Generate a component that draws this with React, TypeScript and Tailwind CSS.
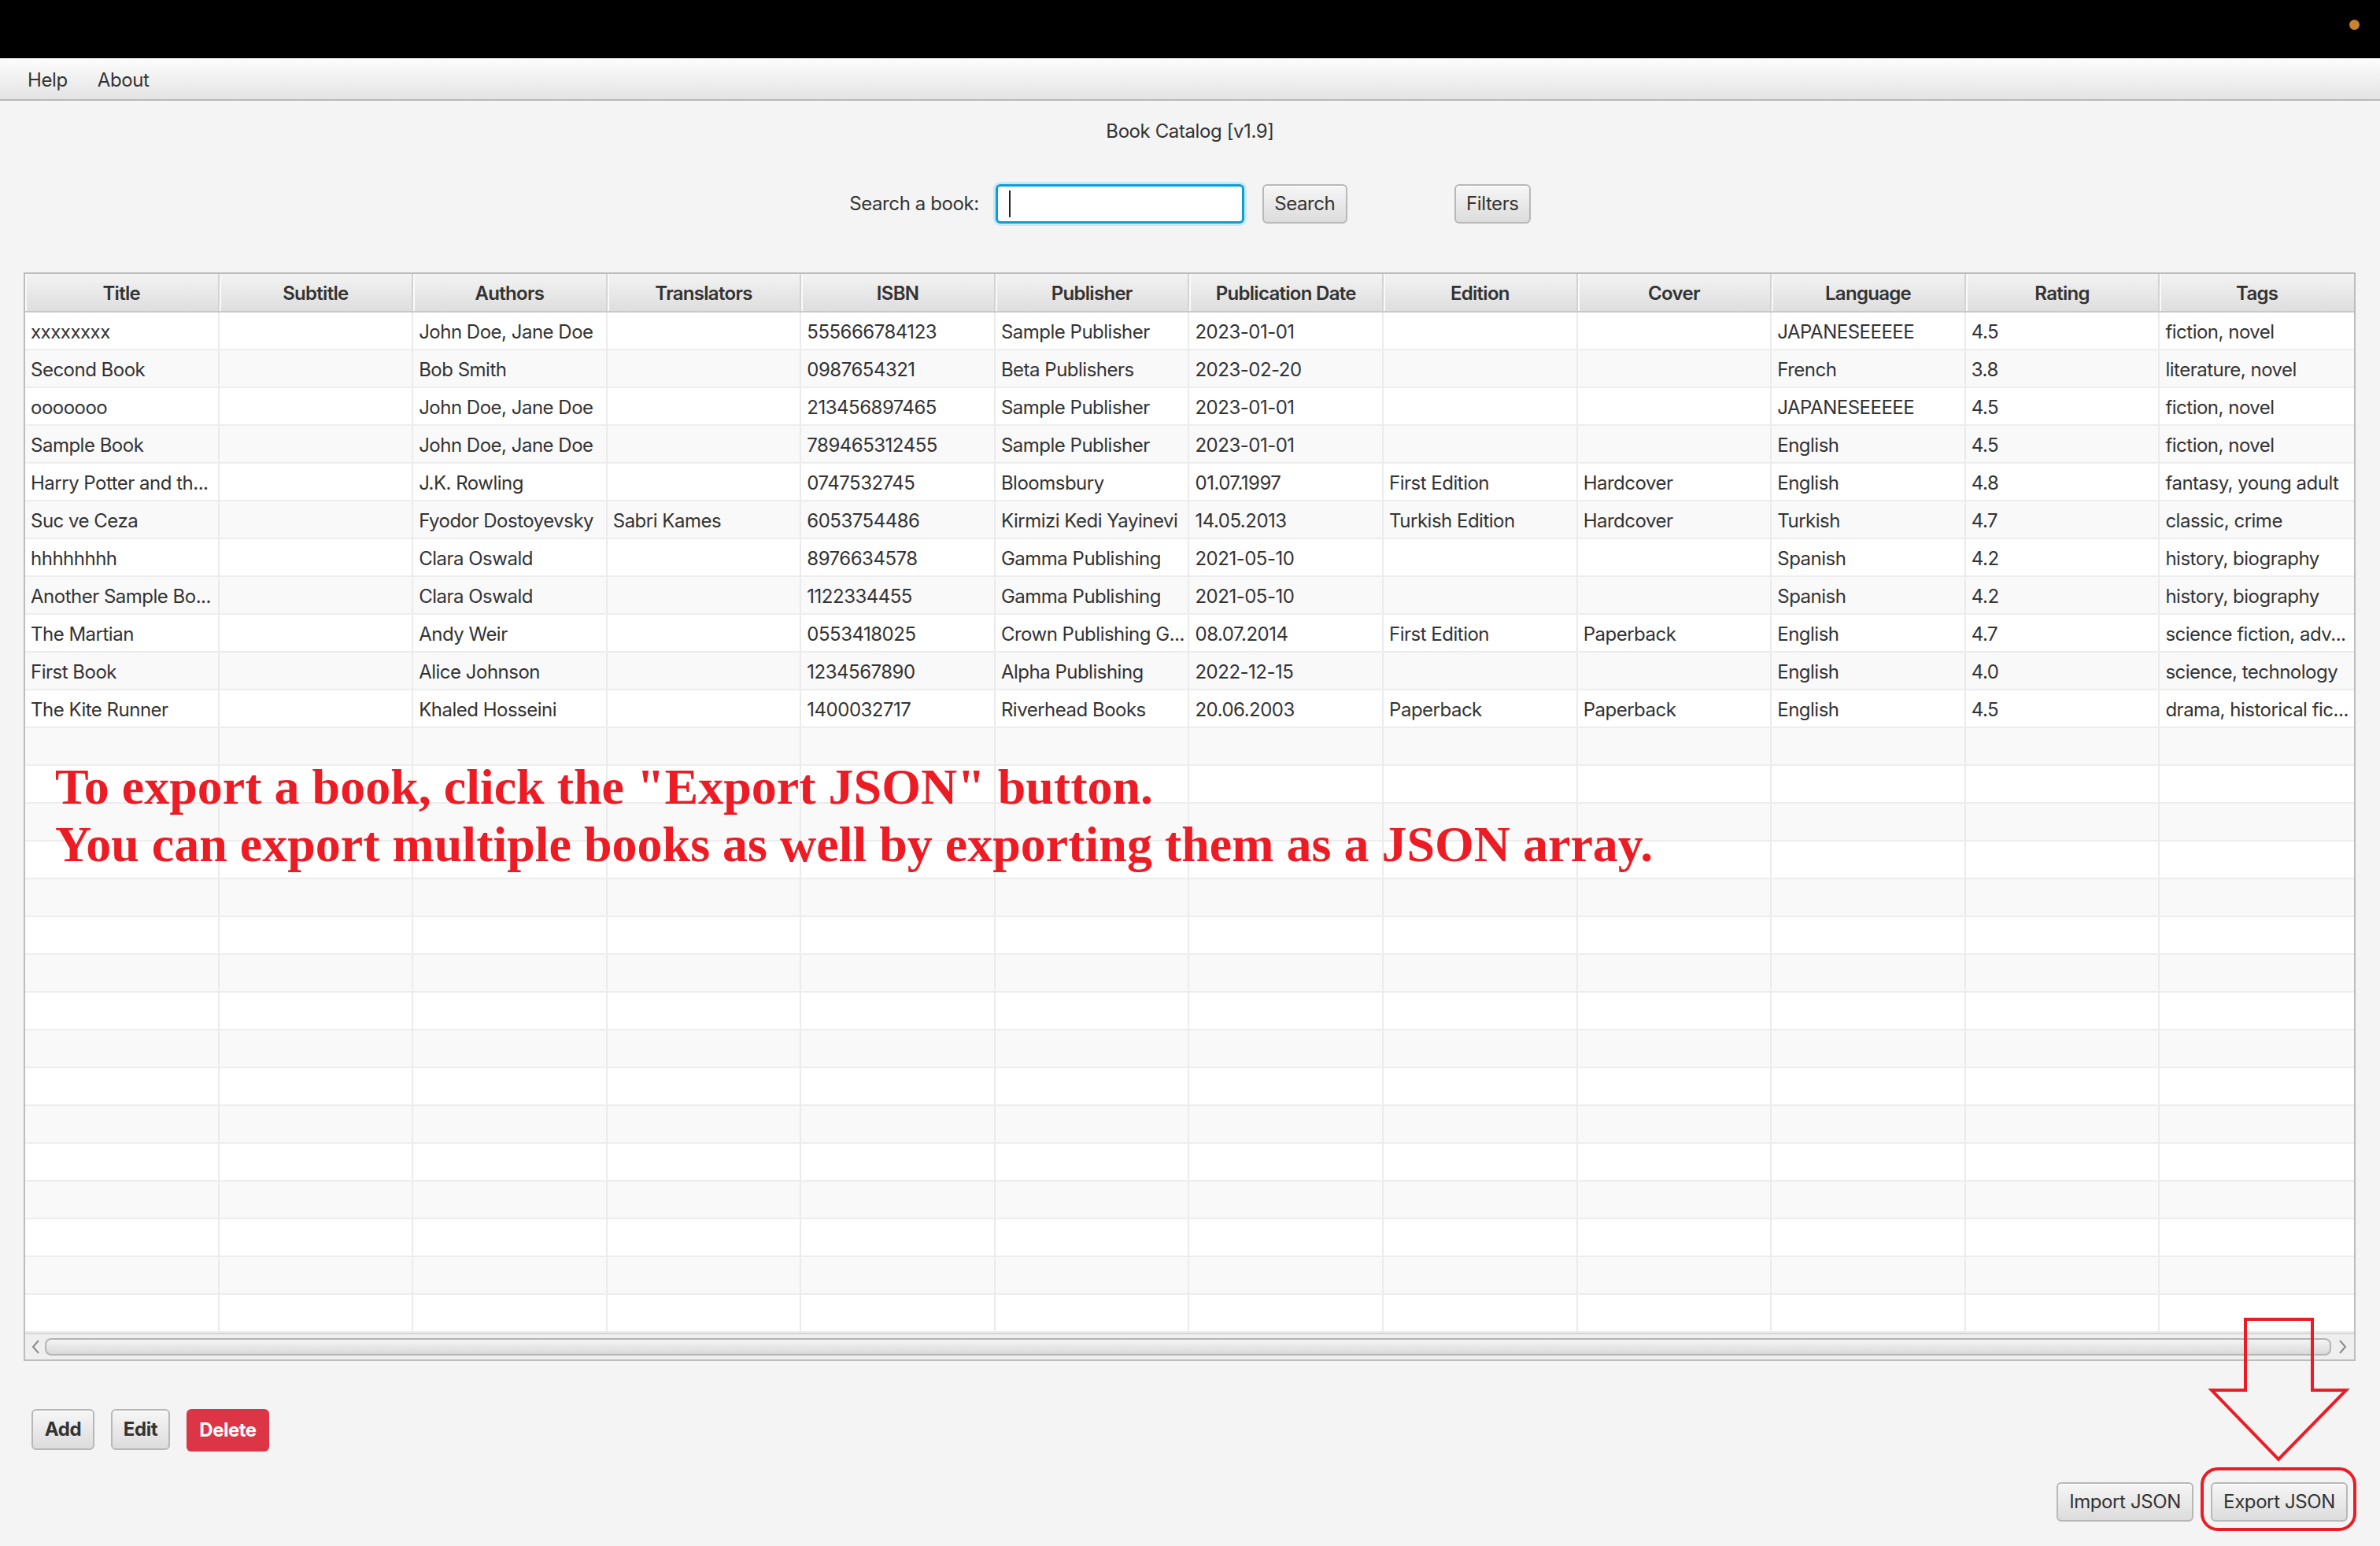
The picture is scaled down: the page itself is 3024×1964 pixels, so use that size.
import React from 'react';

const columns = ['Title', 'Subtitle', 'Authors', 'Translators', 'ISBN', 'Publisher', 'Publication Date', 'Edition', 'Cover', 'Language', 'Rating', 'Tags'];

const books: string[][] = [
    ['xxxxxxxx', '', 'John Doe, Jane Doe', '', '555666784123', 'Sample Publisher', '2023-01-01', '', '', 'JAPANESEEEEE', '4.5', 'fiction, novel'],
    ['Second Book', '', 'Bob Smith', '', '0987654321', 'Beta Publishers', '2023-02-20', '', '', 'French', '3.8', 'literature, novel'],
    ['ooooooo', '', 'John Doe, Jane Doe', '', '213456897465', 'Sample Publisher', '2023-01-01', '', '', 'JAPANESEEEEE', '4.5', 'fiction, novel'],
    ['Sample Book', '', 'John Doe, Jane Doe', '', '789465312455', 'Sample Publisher', '2023-01-01', '', '', 'English', '4.5', 'fiction, novel'],
    ['Harry Potter and th...', '', 'J.K. Rowling', '', '0747532745', 'Bloomsbury', '01.07.1997', 'First Edition', 'Hardcover', 'English', '4.8', 'fantasy, young adult'],
    ['Suc ve Ceza', '', 'Fyodor Dostoyevsky', 'Sabri Kames', '6053754486', 'Kirmizi Kedi Yayinevi', '14.05.2013', 'Turkish Edition', 'Hardcover', 'Turkish', '4.7', 'classic, crime'],
    ['hhhhhhhh', '', 'Clara Oswald', '', '8976634578', 'Gamma Publishing', '2021-05-10', '', '', 'Spanish', '4.2', 'history, biography'],
    ['Another Sample Bo...', '', 'Clara Oswald', '', '1122334455', 'Gamma Publishing', '2021-05-10', '', '', 'Spanish', '4.2', 'history, biography'],
    ['The Martian', '', 'Andy Weir', '', '0553418025', 'Crown Publishing G...', '08.07.2014', 'First Edition', 'Paperback', 'English', '4.7', 'science fiction, adv...'],
    ['First Book', '', 'Alice Johnson', '', '1234567890', 'Alpha Publishing', '2022-12-15', '', '', 'English', '4.0', 'science, technology'],
    ['The Kite Runner', '', 'Khaled Hosseini', '', '1400032717', 'Riverhead Books', '20.06.2003', 'Paperback', 'Paperback', 'English', '4.5', 'drama, historical fic...'],
];

const TOTAL_ROWS = 27;

function FxButton({ children, className = '' }: { children: React.ReactNode; className?: string }) {
    return (
        <button
            className={`h-[50px] rounded-[6px] border-2 border-[#b8b8b8] bg-gradient-to-b from-[#f6f6f6] to-[#dcdcdc] text-[24px] tracking-[-0.4px] text-[#333] shadow-[inset_0_1px_0_#ffffff] ${className}`}
        >
            {children}
        </button>
    );
}

export default function App() {
    const rows = Array.from({ length: TOTAL_ROWS }, (_, i) => books[i] ?? Array(12).fill(''));

    return (
        <div className="relative w-[3024px] h-[1964px] overflow-hidden bg-[#f4f4f4] flex flex-col font-['Inter','Roboto',sans-serif] text-[#333]">
            {/* Top system bar */}
            <div className="h-[74px] bg-black flex items-center justify-end pr-[26px]">
                <div className="w-[13px] h-[13px] rounded-full bg-[#c98330] -mt-[12px]" />
            </div>

            {/* Menu bar */}
            <div className="h-[54px] flex items-center gap-[38px] pl-[35px] pt-[3px] bg-gradient-to-b from-[#fdfdfd] to-[#e4e4e4] border-b-2 border-[#b9b9b9] text-[24px] tracking-[-0.4px]">
                <span>Help</span>
                <span>About</span>
            </div>

            {/* Title */}
            <div className="h-[76px] flex items-center justify-center pt-[2px] text-[24px] tracking-[-0.4px]">
                Book Catalog [v1.9]
            </div>

            {/* Search row */}
            <div className="mt-[30px] h-[50px] flex items-center justify-center text-[24px] tracking-[-0.4px]">
                <span className="mr-[21px]">Search a book:</span>
                <div className="w-[316px] h-[50px] rounded-[6px] border-[3px] border-[#0a9fd6] bg-white shadow-[0_0_0_3px_#cbe8f5] flex items-center pl-[14px]">
                    <div className="w-[2px] h-[34px] bg-[#222]" />
                </div>
                <FxButton className="ml-[23px] w-[108px]">Search</FxButton>
                <FxButton className="ml-[136px] w-[97px]">Filters</FxButton>
            </div>

            {/* Table */}
            <div className="mt-[62px] ml-[30px] w-[2963px] h-[1383px] border-2 border-[#bdbdbd] bg-white flex flex-col text-[24px] tracking-[-0.5px]">
                <div className="h-[49px] grid grid-cols-12 bg-gradient-to-b from-[#f3f3f3] to-[#dedede] border-b-2 border-[#c9c9c9]">
                    {columns.map((c) => (
                        <div key={c} className="flex items-center justify-center pt-[3px] font-semibold tracking-[-0.7px] border-r-2 border-[#d3d3d3] shadow-[inset_2px_0_0_#fafafa] last:border-r-0">
                            {c}
                        </div>
                    ))}
                </div>
                <div className="flex-1 overflow-hidden">
                    {rows.map((r, i) => (
                        <div key={i} className={`h-[48px] grid grid-cols-12 border-b-2 border-[#ededed] ${i % 2 === 0 ? 'bg-white' : 'bg-[#f9f9f9]'}`}>
                            {r.map((v: string, j: number) => (
                                <div key={j} className="flex items-center pl-[7px] pr-[4px] pt-[3px] whitespace-nowrap overflow-hidden border-r-2 border-[#ebebeb] last:border-r-0">
                                    {v}
                                </div>
                            ))}
                        </div>
                    ))}
                </div>
                {/* Horizontal scroll bar */}
                <div className="h-[34px] shrink-0 border-t-2 border-[#d6d6d6] bg-[#efefef] flex items-center">
                    <div className="w-[25px] flex justify-center">
                        <svg width="12" height="20" viewBox="0 0 12 20"><path d="M10 2 L3 10 L10 18" fill="none" stroke="#8a8a8a" strokeWidth="2" /></svg>
                    </div>
                    <div className="flex-1 h-[22px] rounded-[8px] border-2 border-[#b4b4b4] bg-gradient-to-b from-[#f4f4f4] to-[#d9d9d9]" />
                    <div className="w-[29px] flex justify-center">
                        <svg width="12" height="20" viewBox="0 0 12 20"><path d="M2 2 L9 10 L2 18" fill="none" stroke="#8a8a8a" strokeWidth="2" /></svg>
                    </div>
                </div>
            </div>

            {/* Bottom buttons */}
            <div className="flex justify-between pl-[40px] pr-[41px]">
                <div className="mt-[61px] flex gap-[21px] items-start">
                    <FxButton className="w-[80px] h-[52px] font-bold">Add</FxButton>
                    <FxButton className="w-[75px] h-[52px] font-bold">Edit</FxButton>
                    <button className="w-[105px] h-[54px] rounded-[6px] bg-[#dc3545] text-white text-[24px] font-bold tracking-[-0.5px]">Delete</button>
                </div>
                <div className="mt-[154px] flex gap-[22px]">
                    <FxButton className="w-[174px]">Import JSON</FxButton>
                    <FxButton className="w-[174px]">Export JSON</FxButton>
                </div>
            </div>

            {/* Red annotation text */}
            <div className="absolute left-[70px] top-[963px] text-[64px] leading-[73px] font-bold text-[#ed1c24] font-['Liberation_Serif','Times_New_Roman',serif]">
                <div>To export a book, click the "Export JSON" button.</div>
                <div>You can export multiple books as well by exporting them as a JSON array.</div>
            </div>

            {/* Red arrow annotation */}
            <svg className="absolute left-[2800px] top-[1670px]" width="200" height="195" viewBox="0 0 200 195">
                <polygon
                    points="53,6 138,6 138,96 181,96 95,184 10,96 53,96"
                    fill="none"
                    stroke="#ed1c24"
                    strokeWidth="4"
                    strokeLinejoin="miter"
                />
            </svg>
            <div className="absolute left-[2796px] top-[1864px] w-[198px] h-[81px] rounded-[22px] border-[4px] border-[#ed1c24]" />
        </div>
    );
}
